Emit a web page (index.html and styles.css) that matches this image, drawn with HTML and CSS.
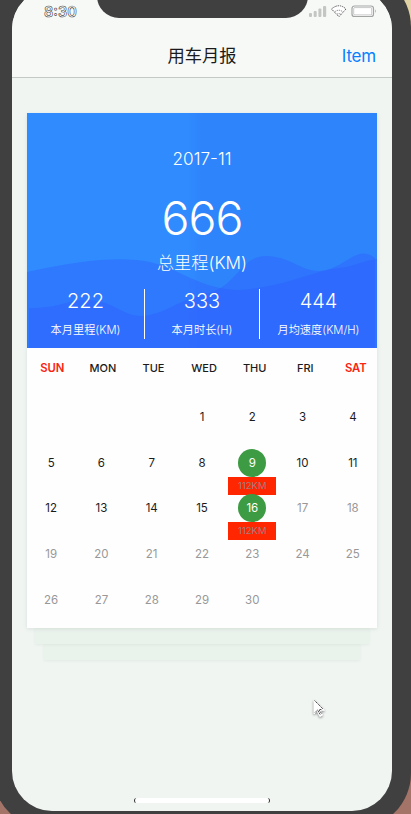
FILE: index.html
```html
<!DOCTYPE html>
<html lang="zh-CN">
<head>
<meta charset="utf-8">
<title>用车月报</title>
<link rel="stylesheet" href="styles.css">
</head>
<body>
<div class="phone">
  <div class="screen">
    <header class="top">
      <div class="status">
        <span class="time">8:30</span>
        <svg class="status-icons" width="68" height="14" viewBox="0 0 68 14">
          <g fill="#c4c6c4"><rect x="0" y="8" width="3" height="4" rx="1"/><rect x="4.7" y="6" width="3" height="6" rx="1"/><rect x="9.4" y="3.5" width="3" height="8.5" rx="1"/><rect x="14" y="1" width="3.2" height="11" rx="1"/></g>
          <path d="M22.5 4Q30 -2.5 37 4L30 11.7Z" fill="#fff" stroke="#333" stroke-width=".8" stroke-dasharray="1.4 .9"/>
          <path d="M25.5 7Q30 3.5 34 7M28 9.3Q30 8 31.8 9.3" fill="none" stroke="#555" stroke-width=".7" stroke-dasharray="1.4 .9"/>
          <rect x="43" y="1" width="21.5" height="10.5" rx="2.6" fill="#fff" stroke="#a2a5a3" stroke-width="1.2"/>
          <rect x="44.7" y="2.6" width="18" height="7.3" rx="1" fill="#fff" stroke="#777" stroke-width=".4"/>
          <path d="M66 4.3Q67.3 6 66 8Z" fill="#888"/>
        </svg>
      </div>
      <div class="nav">
        <span></span>
        <h1>用车月报</h1>
        <a class="item">Item</a>
      </div>
    </header>
    <main class="stack">
      <section class="card">
        <div class="summary">
          <svg class="waves" width="350" height="235" viewBox="0 0 350 235">
            <path d="M0 159C55 147 94 143 123 149C154 156 174 177 213 177C255 174 283 160 305 156C327 154 331 149 350 146V235H0Z"/>
            <path d="M2 195C34 195 39 187 60 187C86 187 95 203 114 203C137 202 151 187 178 181C210 175 213 143 239 143C262 143 274 158 291 158C319 157 329 130 348 145V235H2Z"/>
          </svg>
          <div class="month">2017-11</div>
          <div class="total">666</div>
          <div class="total-label">总里程(KM)</div>
          <div class="stats">
            <div class="stat"><b>222</b><span>本月里程(KM)</span></div>
            <div class="stat"><b>333</b><span>本月时长(H)</span></div>
            <div class="stat"><b>444</b><span>月均速度(KM/H)</span></div>
          </div>
        </div>
        <div class="calendar">
          <div class="week">
            <span class="weekend">SUN</span><span>MON</span><span>TUE</span><span>WED</span><span>THU</span><span>FRI</span><span class="weekend">SAT</span>
          </div>
          <div class="days">
            <div></div><div></div><div></div><div><i>1</i></div><div><i>2</i></div><div><i>3</i></div><div><i>4</i></div>
            <div><i>5</i></div><div><i>6</i></div><div><i>7</i></div><div><i>8</i></div><div class="active"><i>9</i><em>112KM</em></div><div><i>10</i></div><div><i>11</i></div>
            <div><i>12</i></div><div><i>13</i></div><div><i>14</i></div><div><i>15</i></div><div class="active"><i>16</i><em>112KM</em></div><div class="off"><i>17</i></div><div class="off"><i>18</i></div>
            <div class="off"><i>19</i></div><div class="off"><i>20</i></div><div class="off"><i>21</i></div><div class="off"><i>22</i></div><div class="off"><i>23</i></div><div class="off"><i>24</i></div><div class="off"><i>25</i></div>
            <div class="off"><i>26</i></div><div class="off"><i>27</i></div><div class="off"><i>28</i></div><div class="off"><i>29</i></div><div class="off"><i>30</i></div>
          </div>
        </div>
      </section>
      <div class="sheet"></div>
      <div class="sheet sheet-back"></div>
    </main>
    <div class="home"></div>
  </div>
  <div class="notch"></div>
</div>
<svg class="cursor" width="16" height="20" viewBox="0 0 16 20">
  <path d="M1 1V15L4.2 12L6.8 17.5L9.5 16.2L7.3 11.2H11.5Z" fill="#fff" stroke="#fff" stroke-width="1"/>
  <path d="M1.5 1.5L10 10M2 13.5L4.5 11L7.5 16M6 11L9 15M6.5 10.5H9" fill="none" stroke="#333" stroke-width=".9" stroke-dasharray="1.6 .6"/>
</svg>
</body>
</html>
```
FILE: styles.css
```css
* { box-sizing: border-box; }
html { height: 100%; overflow: hidden; }
body {
  margin: 0;
  width: 411px;
  height: 814px;
  overflow: hidden;
  position: relative;
  background: linear-gradient(#e2d3a4 0, #e2d3a4 60px, #a47468 500px, #a47468);
  font-family: Inter, "Noto Sans CJK SC", sans-serif;
  color: #1b1b1b;
}
.phone {
  position: absolute;
  left: -7px;
  top: -29px;
  width: 418px;
  height: 858px;
  padding: 18px 19px;
  border-radius: 56px;
  background: #404040;
}
.screen {
  display: flex;
  flex-direction: column;
  height: 822px;
  border-radius: 40px;
  overflow: hidden;
  background: #f0f5f2;
}
.notch {
  position: absolute;
  left: 104px;
  top: 18px;
  width: 211px;
  height: 29px;
  border-radius: 0 0 22px 22px;
  background: #404040;
}
.top {
  flex: none;
  height: 89px;
  padding-top: 11px;
  background: #f7f9f7;
  border-bottom: 1px solid #c4c9c6;
}
.status {
  display: flex;
  justify-content: space-between;
  height: 30px;
  padding: 4px 15px 0 32px;
}
.time {
  font-size: 14.5px;
  line-height: 16px;
  font-weight: 600;
  letter-spacing: 0;
  color: #fff;
  -webkit-text-stroke: .6px #444;
}
.status-icons { margin-top: 1px; }
.nav {
  display: grid;
  grid-template-columns: 1fr auto 1fr;
  align-items: center;
  height: 51px;
  padding: 0 16px;
}
h1 {
  margin: 0;
  font-size: 17.3px;
  font-weight: 400;
  line-height: 24px;
}
.item {
  justify-self: end;
  font-size: 17px;
  letter-spacing: -.2px;
  color: #087fff;
}
.stack {
  flex: 1;
  padding: 35px 15px 0;
}
.card {
  position: relative;
  z-index: 2;
  height: 515px;
  background: #fefefe;
  box-shadow: 0 1px 4px rgba(60, 100, 70, .12);
}
.summary {
  position: relative;
  height: 235px;
  padding-top: 34px;
  background: linear-gradient(90deg, #308bff 0, #308bff 46%, #2e84fb 50%, #2e84fb);
  color: #fff;
  text-align: center;
}
.waves { position: absolute; left: 0; top: 0; }
.waves path { fill: #3058ff; fill-opacity: .36; }
.month, .total, .total-label, .stats { position: relative; }
.month { font-size: 17.2px; line-height: 23px; font-weight: 300; }
.total {
  margin-top: 21px;
  font-size: 46.5px;
  line-height: 54px;
  font-weight: 300;
  letter-spacing: -.9px;
}
.total-label { margin-top: 6px; font-size: 17.2px; line-height: 24px; font-weight: 300; }
.stats {
  display: grid;
  grid-template-columns: 118px 115px 117px;
  height: 49px;
  margin-top: 14px;
}
.stat { border-right: 1px solid #fff; }
.stat:last-child { border: 0; }
.stat b { display: block; font-size: 20px; font-weight: 300; line-height: 25px; }
.stat span { display: block; margin-top: 8px; font-size: 11.2px; line-height: 17px; font-weight: 350; }
.calendar { width: 352px; margin-left: -1px; }
.week {
  display: grid;
  grid-template-columns: repeat(7, 50.6px);
  height: 46px;
  padding: 13px 0 0 1px;
  text-align: center;
  font-size: 11px;
  line-height: 14px;
  font-weight: 500;
}
.week .weekend { color: #fc2312; font-weight: 600; font-size: 11.3px; }
.days {
  display: grid;
  grid-template-columns: repeat(7, 1fr);
  grid-auto-rows: 45.7px;
  padding-top: 9px;
}
.days > div {
  display: flex;
  flex-direction: column;
  align-items: center;
}
.days i {
  width: 28px;
  height: 28px;
  border-radius: 50%;
  font-size: 11.5px;
  font-style: normal;
  line-height: 28px;
  text-align: center;
}
.off { color: #989898; }
.active i { background: #3d9b43; color: #fff; }
.days em {
  width: 48px;
  height: 18px;
  background: #ff2600;
  color: #97827c;
  font-size: 9.5px;
  font-style: normal;
  line-height: 18px;
  text-align: center;
}
.sheet {
  position: relative;
  z-index: 1;
  height: 16px;
  margin: 0 8px;
  background: #eaf2ec;
  box-shadow: 0 1px 3px rgba(60, 100, 70, .07);
}
.sheet-back { z-index: 0; margin: 0 17px; }
.home {
  align-self: center;
  flex: none;
  width: 136px;
  height: 5px;
  margin-bottom: 8px;
  border-radius: 3px;
  background: #fff;
  border: solid #333;
  border-width: 0 1px;
}
.cursor {
  position: absolute;
  left: 313px;
  top: 699px;
  filter: drop-shadow(0 1px 1px rgba(0, 0, 0, .45));
}
```
